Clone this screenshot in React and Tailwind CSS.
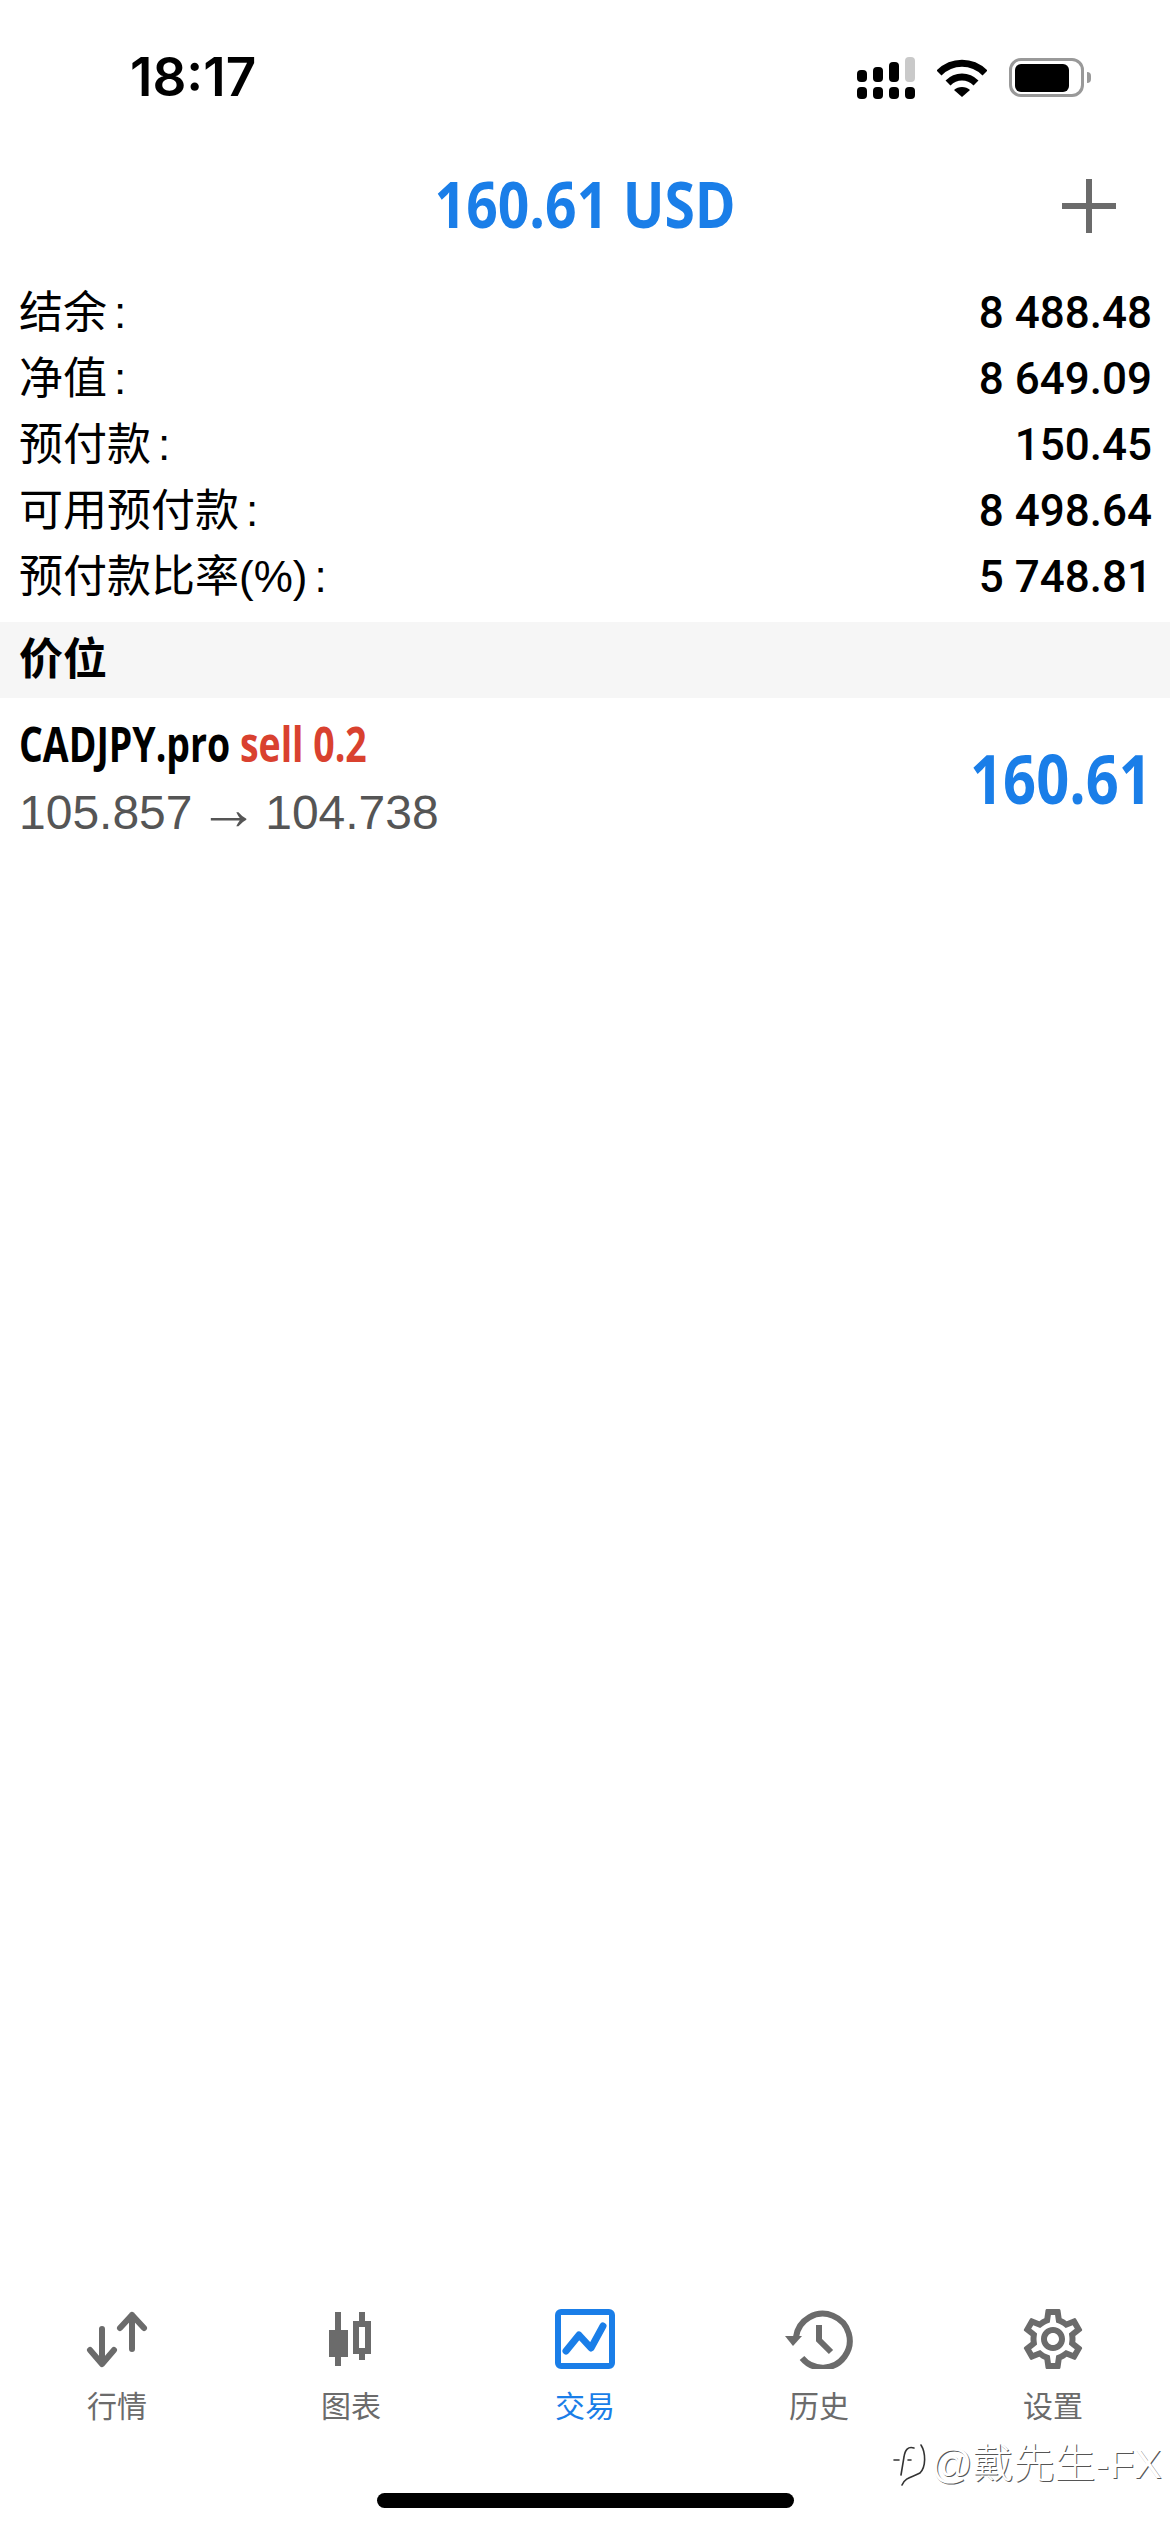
import { MdOutlineSettings } from 'react-icons/md'

const sans = "font-['Liberation_Sans','Noto_Sans_CJK_SC',sans-serif]"

const rows = [
  ['结余', '8 488.48'],
  ['净值', '8 649.09'],
  ['预付款', '150.45'],
  ['可用预付款', '8 498.64'],
  ['预付款比率(%)', '5 748.81'],
]

const tabs = [
  { label: '行情', icon: <QuotesIcon /> },
  { label: '图表', icon: <ChartIcon /> },
  { label: '交易', icon: <TradeIcon />, active: true },
  { label: '历史', icon: <HistoryIcon /> },
  { label: '设置', icon: <MdOutlineSettings size={72} color="#6b6b6b" /> },
]

function QuotesIcon() {
  return (
    <svg width="64" height="60" viewBox="0 0 64 60" fill="none" stroke="#6b6b6b" strokeWidth="6" strokeLinecap="round" strokeLinejoin="round">
      <path d="M17 20V54M5 41L17 55L29 41" />
      <path d="M47 6V40M35 19L47 6L59 19" />
    </svg>
  )
}

function ChartIcon() {
  return (
    <svg width="44" height="60" viewBox="0 0 44 60" fill="none">
      <path d="M9 3V57" stroke="#6b6b6b" strokeWidth="6" />
      <rect x="0" y="21" width="19" height="27" fill="#6b6b6b" />
      <path d="M33 3V51" stroke="#6b6b6b" strokeWidth="6" />
      <rect x="27" y="15" width="12" height="27" fill="#fff" stroke="#6b6b6b" strokeWidth="6" />
    </svg>
  )
}

function TradeIcon() {
  return (
    <svg width="60" height="60" viewBox="0 0 60 60" fill="none" stroke="#1a7ee8">
      <rect x="3" y="3" width="54" height="54" rx="3" strokeWidth="6" />
      <path d="M11 42L24 26L36 39L48 17" strokeWidth="7" strokeLinecap="round" strokeLinejoin="round" />
    </svg>
  )
}

function HistoryIcon() {
  return (
    <svg width="68" height="60" viewBox="0 0 68 60" fill="none">
      <path d="M11 28A27 27 0 1 1 17 49" stroke="#6b6b6b" strokeWidth="6" />
      <path d="M0 27H17L8 37Z" fill="#6b6b6b" />
      <path d="M34 16V31L46 43" stroke="#6b6b6b" strokeWidth="6" />
    </svg>
  )
}

function StatusIcons() {
  return (
    <div className="flex items-center">
      <svg width="60" height="42" viewBox="0 0 60 42" fill="#000">
        <rect x="1" y="13" width="10" height="12" rx="4" />
        <rect x="17" y="10" width="10" height="15" rx="4" />
        <rect x="33" y="5" width="10" height="20" rx="4" />
        <rect x="49" y="0" width="10" height="25" rx="4" fill="#c9c9c9" />
        <rect x="1" y="30" width="10" height="12" rx="4" />
        <rect x="17" y="30" width="10" height="12" rx="4" />
        <rect x="33" y="30" width="10" height="12" rx="4" />
        <rect x="49" y="30" width="10" height="12" rx="4" />
      </svg>
      <svg className="ml-[21px]" width="50" height="38" viewBox="0 0 50 38" fill="none" stroke="#000" strokeWidth="7">
        <path d="M2 14C15 1 35 1 48 14" />
        <path d="M11 24C19 16 31 16 39 24" />
        <path d="M25 38L17 31C21 27 29 27 33 31Z" fill="#000" stroke="none" />
      </svg>
      <div className="ml-[22px] flex items-center">
        <div className="flex h-[39px] w-[75px] items-center rounded-[12px] border-[3px] border-[#999] pl-[3px]">
          <div className="h-[28px] w-[54px] rounded-[6px] bg-black" />
        </div>
        <div className="ml-[3px] h-[11px] w-1 rounded-r-full bg-[#999]" />
      </div>
    </div>
  )
}

function Watermark() {
  return (
    <div className="absolute left-[893px] top-[16px] flex items-center">
      <svg width="34" height="46" viewBox="0 0 34 46" fill="none" stroke="#333" strokeWidth="1.6" strokeLinecap="round">
        <path d="M28 4C33 12 33 26 27 32C20 36 12 36 9 44" />
        <path d="M21 7C15 5 12 9 11 16L8 34" />
        <path d="M1 19H6M15 19H18" />
      </svg>
      <span className="ml-[4px] text-[41px] font-light leading-none text-white [text-shadow:1px_1px_0_#555]">@戴先生-FX</span>
    </div>
  )
}

export default function App() {
  return (
    <div className={`flex h-[2532px] w-[1170px] flex-col overflow-hidden bg-white ${sans}`}>
      <div className="flex h-[155px] items-center justify-between pl-[130px] pr-[79px]">
        <span className="font-['Inter',sans-serif] text-[53px] font-semibold leading-none text-black">18:17</span>
        <StatusIcons />
      </div>

      <div className="relative flex h-[100px] items-center justify-center pb-[4px]">
        <span className="inline-block scale-x-[0.85] whitespace-nowrap font-['Open_Sans',sans-serif] text-[65px] font-bold leading-none text-[#1a7ee8]">160.61 USD</span>
        <div className="absolute right-[54px] top-[24px] h-[54px] w-[54px]">
          <div className="absolute left-[24px] top-0 h-full w-[6px] bg-[#6b6b6b]" />
          <div className="absolute left-0 top-[24px] h-[6px] w-full bg-[#6b6b6b]" />
        </div>
      </div>

      <div className="mt-[25px] flex flex-col pl-[19px] pr-[18px]">
        {rows.map(([label, value]) => (
          <div key={label} className="flex h-[66px] items-center justify-between text-[44px] text-black">
            <span>{label}<span className="ml-[7px]">:</span></span>
            <span className="font-['Roboto',sans-serif] font-medium">{value}</span>
          </div>
        ))}
      </div>

      <div className="mt-[12px] flex h-[76px] items-center bg-[#f6f6f6] pl-[19px] text-[44px] font-semibold leading-none text-black">价位</div>

      <div className="flex h-[160px] items-center justify-between pl-[19px] pr-[18px]">
        <div className="flex flex-col">
          <div className="origin-left scale-x-[0.78] whitespace-nowrap font-['Open_Sans',sans-serif] text-[48px] font-bold leading-[69px]">
            <span className="text-black">CADJPY.pro</span> <span className="text-[#d9412f]">sell 0.2</span>
          </div>
          <div className="text-[48px] leading-[69px] text-[#555]">105.857 <span className="-mx-[7px] text-[60px] leading-none">→</span> 104.738</div>
        </div>
        <span className="origin-right scale-x-[0.85] font-['Open_Sans',sans-serif] text-[68px] font-bold leading-none text-[#1a7ee8]">160.61</span>
      </div>

      <div className="mt-auto flex flex-col">
        <div className="grid grid-cols-5">
          {tabs.map(tab => (
            <div key={tab.label} className="flex flex-col items-center">
              <div className="flex h-[60px] items-center justify-center">{tab.icon}</div>
              <span className={`mt-[20px] text-[30px] leading-[36px] ${tab.active ? 'text-[#1a7ee8]' : 'text-[#6b6b6b]'}`}>{tab.label}</span>
            </div>
          ))}
        </div>
        <div className="relative h-[107px]">
          <Watermark />
          <div className="absolute bottom-[24px] left-[377px] h-[15px] w-[417px] rounded-full bg-black" />
        </div>
      </div>
    </div>
  )
}
